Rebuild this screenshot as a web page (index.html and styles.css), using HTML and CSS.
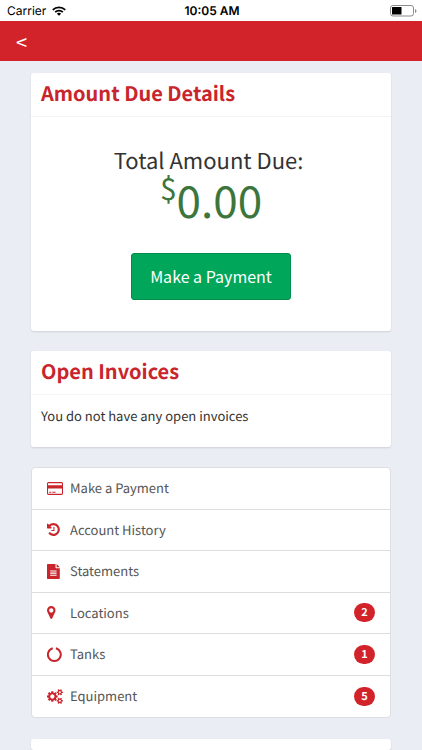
FILE: index.html
```html
<!DOCTYPE html>
<html lang="en">
<head>
<meta charset="utf-8">
<meta name="viewport" content="width=device-width, initial-scale=1">
<title>Amount Due</title>
<link rel="stylesheet" href="styles.css">
</head>
<body>
<div class="status">
  <div class="carrier">Carrier
    <svg class="wifi" viewBox="0 0 28 20" aria-hidden="true"><g fill="none" stroke="#000" stroke-width="3.6"><path d="M1.5 7.6a18 18 0 0 1 25 0"/><path d="M6.300 12.200a11 11 0 0 1 15.400 0"/></g><path d="M9.700 15.400a6.200 6.200 0 0 1 8.600 0L14 19.700z"/></svg>
  </div>
  <div class="clock">10:05 AM</div>
  <svg class="battery" viewBox="0 0 27 12" aria-hidden="true"><rect x=".5" y=".5" width="23" height="10.500" rx="2.500" fill="#fff" stroke="#8c8c8c"/><rect x="2" y="2" width="9.500" height="7.500" rx=".5"/><path d="M25 4v4q1.500-.5 1.500-2T25 4z" fill="#8c8c8c"/></svg>
</div>
<header class="topbar"><a class="back" href="#" aria-label="Back">&lt;</a></header>
<main class="content">
  <section class="card">
    <h2 class="card-title">Amount Due Details</h2>
    <div class="due">
      <p class="due-label">Total Amount Due:&nbsp;</p>
      <p class="due-amount"><span class="currency">$</span>0.00</p>
      <button class="pay" type="button">Make a Payment</button>
    </div>
  </section>
  <section class="card">
    <h2 class="card-title">Open Invoices</h2>
    <p class="note">You do not have any open invoices</p>
  </section>
  <nav class="menu">
    <a class="item" href="#"><svg class="icon" viewBox="0 0 1920 1792" aria-hidden="true"><path fill-rule="evenodd" d="M160 128H1760q66 0 113 47t47 113V1504q0 66-47 113t-113 47H160q-66 0-113-47T0 1504V288q0-66 47-113t113-47zM160 256q-13 0-22.500 9.500T128 288V512H1792V288q0-13-9.500-22.500T1760 256zM1760 1536q13 0 22.500-9.500t9.500-22.500V896H128v608q0 13 9.500 22.500t22.500 9.500zM256 1408V1280H512v128zM640 1408V1280h384v128z"/></svg>Make a Payment</a>
    <a class="item" href="#"><svg class="icon" viewBox="128 0 1920 1792" aria-hidden="true"><path d="M1664 896q0 156-61 298t-164 245-245 164-298 61q-172 0-327-72.500t-264-204.500q-7-10-6.500-22.500t8.500-20.500l137-138q10-9 25-9 16 2 23 12 73 95 179 147t225 52q104 0 198.500-40.500t163.500-109.500 109.500-163.500 40.500-198.500-40.500-198.500-109.500-163.500-163.500-109.500-198.500-40.500q-98 0-188 35.500t-160 101.500l137 138q31 30 14 69-17 40-59 40h-448q-26 0-45-19t-19-45v-448q0-42 40-59 39-17 69 14l130 129q107-101 244.500-156.500t284.500-55.500q156 0 298 61t245 164 164 245 61 298zm-640-288v448q0 14-9 23t-23 9h-320q-14 0-23-9t-9-23v-64q0-14 9-23t23-9h224v-352q0-14 9-23t23-9h64q14 0 23 9t9 23z"/></svg>Account History</a>
    <a class="item" href="#"><svg class="icon" viewBox="0 0 1920 1792" aria-hidden="true"><path fill-rule="evenodd" d="M1024 0v416q0 40 28 68t68 28h416v1184q0 40-28 68t-68 28H96q-40 0-68-28t-28-68V96q0-40 28-68T96 0zM1152 0q20 14 34 28l322 322q14 14 28 34H1152zM384 768v128h768V768zM384 1024v128h768v-128zM384 1280v128h768v-128z"/></svg>Statements</a>
    <a class="item" href="#"><svg class="icon" viewBox="384 0 1920 1792" aria-hidden="true"><path d="M1152 640q0-106-75-181t-181-75-181 75-75 181 75 181 181 75 181-75 75-181zm256 0q0 109-33 179l-364 774q-16 33-47.500 52t-67.500 19-67.500-19-46.500-52l-365-774q-33-70-33-179 0-212 150-362t362-150 362 150 150 362z"/></svg>Locations<span class="badge">2</span></a>
    <a class="item" href="#"><svg class="icon" viewBox="0 0 1920 1792" aria-hidden="true"><path fill="none" stroke="currentColor" stroke-width="240" d="M1070 155A770 770 0 1 1 690 155"/></svg>Tanks<span class="badge">1</span></a>
    <a class="item" href="#"><svg class="icon" viewBox="0 0 1920 1792" aria-hidden="true"><path d="M896 896q0-106-75-181t-181-75-181 75-75 181 75 181 181 75 181-75 75-181zm768 512q0-52-38-90t-90-38-90 38-38 90q0 53 37.500 90.500t90.500 37.500 90.500-37.500 37.500-90.500zm0-1024q0-52-38-90t-90-38-90 38-38 90q0 53 37.500 90.500t90.500 37.500 90.500-37.500 37.500-90.500zm-384 421v185q0 10-7 19.500t-16 10.500l-155 24q-11 35-32 76 34 48 90 115 7 11 7 20 0 12-7 19-23 30-82.500 89.500t-78.500 59.500q-11 0-21-7l-115-90q-37 19-77 31-11 108-23 155-7 24-30 24h-186q-11 0-20-7.500t-10-17.500l-23-153q-34-10-75-31l-118 89q-7 7-20 7-11 0-21-8-144-133-144-160 0-9 7-19 10-14 41-53t47-61q-23-44-35-82l-152-24q-10-1-17-9.500t-7-19.500v-185q0-10 7-19.500t16-10.500l155-24q11-35 32-76-34-48-90-115-7-11-7-20 0-12 7-20 22-30 82-89t79-59q11 0 21 7l115 90q34-18 77-32 11-108 23-154 7-24 30-24h186q11 0 20 7.500t10 17.500l23 153q34 10 75 31l118-89q8-7 20-7 11 0 21 8 144 133 144 160 0 8-7 19-12 16-42 54t-45 60q23 48 34 82l152 23q10 2 17 10.500t7 19.500zm640 533v140q0 16-149 31-12 27-30 52 51 113 51 138 0 4-4 7-122 71-124 71-8 0-46-47t-52-68q-20 2-30 2t-30-2q-14 21-52 68t-46 47q-2 0-124-71-4-3-4-7 0-25 51-138-18-25-30-52-149-15-149-31v-140q0-16 149-31 13-29 30-52-51-113-51-138 0-4 4-7 4-2 35-20t59-34 30-16q8 0 46 46.500t52 67.500q20-2 30-2t30 2q51-71 92-112l6-2q4 0 124 70 4 3 4 7 0 25-51 138 17 23 30 52 149 15 149 31zm0-1024v140q0 16-149 31-12 27-30 52 51 113 51 138 0 4-4 7-122 71-124 71-8 0-46-47t-52-68q-20 2-30 2t-30-2q-14 21-52 68t-46 47q-2 0-124-71-4-3-4-7 0-25 51-138-18-25-30-52-149-15-149-31v-140q0-16 149-31 13-29 30-52-51-113-51-138 0-4 4-7 4-2 35-20t59-34 30-16q8 0 46 46.500t52 67.500q20-2 30-2t30 2q51-71 92-112l6-2q4 0 124 70 4 3 4 7 0 25-51 138 17 23 30 52 149 15 149 31z"/></svg>Equipment<span class="badge">5</span></a>
  </nav>
  <section class="card card-next"></section>
</main>
</body>
</html>
```
FILE: styles.css
```css
* { box-sizing: border-box; }
body {
  margin: 0;
  display: flex;
  flex-direction: column;
  height: 100vh;
  overflow: hidden;
  background: #eaedf3;
  color: #333;
  font: 13px/20px "Noto Sans CJK SC", "Noto Sans", sans-serif;
  text-rendering: geometricPrecision;
}
h2, p { margin: 0; }
a { color: inherit; text-decoration: none; }

.status {
  display: grid;
  grid-template-columns: 1fr auto 1fr;
  align-items: center;
  flex: none;
  height: 21px;
  padding: 0 5px 0 7px;
  background: #fff;
  color: #000;
  font: 12px/20px Inter, sans-serif;
}
.carrier { display: flex; align-items: center; gap: 6px; }
.wifi { width: 14px; height: 10px; }
.clock { font-weight: 600; }
.battery { width: 27px; height: 12px; justify-self: end; }

.topbar {
  display: flex;
  align-items: center;
  flex: none;
  height: 40px;
  padding: 2px 16px 0;
  background: #d2232a;
  color: #fff;
}
.back { font-size: 20px; line-height: 38px; }

.content {
  display: flex;
  flex-direction: column;
  flex: 1;
  min-height: 0;
  padding: 12px 31px 0;
}
.card {
  flex: none;
  margin-bottom: 20px;
  background: #fff;
  border-radius: 3px;
  box-shadow: 0 1px 2px rgba(0, 0, 0, .12);
}
.card-title {
  padding: 4px 10px 7px;
  border-bottom: 1px solid #f4f4f4;
  color: #c9252c;
  font-size: 20px;
  font-weight: 700;
  line-height: 32px;
}
.due {
  display: flex;
  flex-direction: column;
  align-items: center;
  padding: 28px 10px 31px;
}
.due-label { font-size: 22px; line-height: 30px; }
.due-amount {
  display: flex;
  align-items: flex-start;
  color: #3c763d;
  font-size: 44px;
  line-height: 48px;
}
.currency { font-size: 30px; line-height: 24px; }
.pay {
  margin-top: 30px;
  height: 47px;
  padding: 0 18px 2px;
  border: 1px solid #008d4c;
  border-radius: 3px;
  background: #00a65a;
  color: #fff;
  font: inherit;
  font-size: 16px;
}
.note { padding: 11px 10px 21px; }

.menu {
  display: grid;
  flex: none;
  grid-auto-rows: 1fr;
  min-height: 251px;
  margin-bottom: 21px;
  border: 1px solid #dcdee1;
  border-radius: 4px;
  background: #fff;
}
.item {
  display: flex;
  align-items: center;
  gap: 7px;
  padding: 0 15px;
  border-bottom: 1px solid #ddd;
  color: #555;
}
.item:last-child { border-bottom: 0; }
.icon { width: 16px; height: 15px; fill: currentColor; color: #c9252c; }
.badge {
  margin-left: auto;
  min-width: 21px;
  padding: 0 7px;
  border-radius: 10px;
  background: #d2232a;
  color: #fff;
  font-size: 11px;
  font-weight: 700;
  line-height: 19px;
  text-align: center;
}
.card-next { flex: 1; margin-bottom: 0; }
```
